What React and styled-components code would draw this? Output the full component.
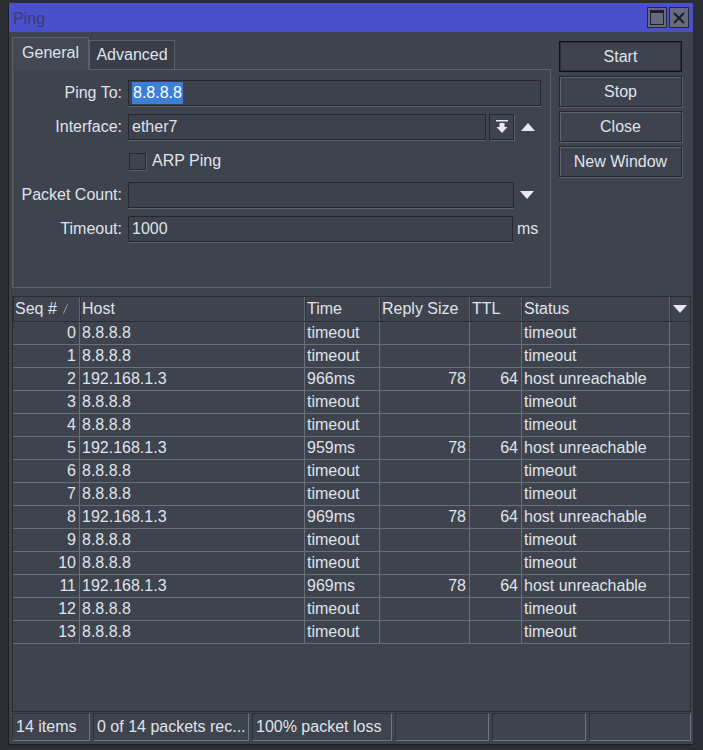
import React from "react";
import styled, { createGlobalStyle } from "styled-components";

const Global = createGlobalStyle`
  html, body { margin: 0; padding: 0; background: #2a2d33; }
  body { font-family: "Liberation Sans", Arial, sans-serif; font-size: 16px; color: #dfe3ea; }
  * { box-sizing: border-box; }
`;

const Screen = styled.div`
  width: 703px;
  height: 750px;
  padding: 3px 0 0 8px;
  background: #2a2d33;
`;

const Window = styled.div`
  width: 685px;
  height: 742px;
  background: #3f434e;
  border-left: 1px solid #1c1e23;
  border-bottom: 1px solid #1c1e23;
  display: flex;
  flex-direction: column;
`;

const TitleBar = styled.div`
  height: 29px;
  background: #4a4fcc;
  display: flex;
  align-items: center;
  padding: 0 4px 0 4px;
  color: #393e6e;
  flex-shrink: 0;
`;

const Title = styled.div`
  flex: 1;
  padding-top: 2px;
`;

const TitleBtn = styled.div`
  width: 20px;
  height: 21px;
  margin-left: 2px;
  background: #676b80;
  border: 1px solid #262834;
  display: flex;
  align-items: center;
  justify-content: center;
`;

const Body = styled.div`
  flex: 1;
  display: flex;
  flex-direction: column;
  padding: 5px 2px 3px 3px;
`;

const Top = styled.div`
  display: flex;
  height: 255px;
`;

const Left = styled.div`
  width: 539px;
  display: flex;
  flex-direction: column;
`;

const Tabs = styled.div`
  display: flex;
  align-items: flex-end;
  height: 33px;
`;

const Tab = styled.div`
  height: ${(p) => (p.$active ? "33px" : "30px")};
  width: ${(p) => p.$w}px;
  border: 1px solid #5a5f6a;
  border-bottom: ${(p) => (p.$active ? "none" : "1px solid #5a5f6a")};
  background: ${(p) => (p.$active ? "#434853" : "#393d47")};
  display: flex;
  align-items: center;
  justify-content: center;
  padding-bottom: ${(p) => (p.$active ? "3px" : "0")};
`;

const Panel = styled.div`
  height: 218px;
  border: 1px solid #5a5f6a;
  border-top: none;
  box-shadow: inset 1px 0 0 #4b505b;
  padding: 10px 0 0 0;
  display: flex;
  flex-direction: column;
  gap: 8px;
  position: relative;
`;

const PanelTopLine = styled.div`
  position: absolute;
  top: -1px;
  left: 76px;
  right: -1px;
  height: 1px;
  background: #5a5f6a;
`;

const Row = styled.div`
  display: flex;
  align-items: center;
  height: 26px;
`;

const Label = styled.div`
  width: 115px;
  text-align: right;
  padding-right: 6px;
  flex-shrink: 0;
`;

const Input = styled.div`
  width: ${(p) => p.$w}px;
  height: 26px;
  background: #3d414b;
  border: 1px solid #25282e;
  box-shadow: 0 1px 0 #5a5f6a;
  display: flex;
  align-items: center;
  padding-left: 3px;
`;

const Selected = styled.span`
  background: #3c7fd8;
  color: #ffffff;
  padding: 2px 1px;
`;

const DropBtn = styled.div`
  width: 25px;
  height: 26px;
  margin-left: 3px;
  border: 1px solid #25282e;
  box-shadow: 1px 1px 0 #5a5f6a;
  display: flex;
  align-items: center;
  justify-content: center;
`;

const Arrow = styled.div`
  width: 26px;
  display: flex;
  justify-content: center;
  margin-left: ${(p) => p.$ml || 0}px;
`;

const CheckRow = styled.div`
  display: flex;
  align-items: center;
  height: 18px;
  margin: 4px 0 4px 116px;
`;

const Check = styled.div`
  width: 17px;
  height: 17px;
  border: 1px solid #25282e;
  box-shadow: 1px 1px 0 #5a5f6a;
  margin-right: 6px;
`;

const Unit = styled.div`
  margin-left: 4px;
`;

const Buttons = styled.div`
  margin-left: 8px;
  padding-top: 4px;
  display: flex;
  flex-direction: column;
  gap: 4px;
  width: 123px;
`;

const Button = styled.div`
  height: 31px;
  border: 1px solid ${(p) => (p.$focus ? "#111317" : "#25282e")};
  box-shadow: ${(p) =>
    p.$focus ? "inset 0 0 0 1px #2d3037" : "inset 1px 1px 0 #5d626d, 1px 1px 0 #5a5f6a"};
  display: flex;
  align-items: center;
  justify-content: center;
  background: #3f434e;
`;

const TableBox = styled.div`
  margin-top: 4px;
  width: 679px;
  flex: 1;
  border-top: 1px solid #2a2d33;
  border-left: 1px solid #2a2d33;
  border-right: 1px solid #2a2d33;
  display: flex;
  flex-direction: column;
`;

const cols = "67px 225px 75px 90px 52px 148px 1fr";

const HeadRow = styled.div`
  display: grid;
  grid-template-columns: ${cols};
  height: 25px;
  border-bottom: 1px solid #2a2d33;
`;

const HeadCell = styled.div`
  border-right: 1px solid #5f6471;
  box-shadow: inset 1px 0 0 #2f323a;
  display: flex;
  align-items: center;
  padding-left: 2px;
  gap: 6px;
  &:last-child { border-right: none; justify-content: center; padding-left: 0; }
`;

const DataRow = styled.div`
  display: grid;
  grid-template-columns: ${cols};
  height: 23px;
  border-bottom: 1px solid #6a6f7c;
`;

const Cell = styled.div`
  border-right: 1px solid #6a6f7c;
  display: flex;
  align-items: center;
  justify-content: ${(p) => (p.$right ? "flex-end" : "flex-start")};
  padding: 0 ${(p) => (p.$right ? "3px" : "2px")} 0 2px;
  white-space: nowrap;
  overflow: hidden;
  &:last-child { border-right: none; }
`;

const Empty = styled.div`
  flex: 1;
`;

const StatusBar = styled.div`
  height: 30px;
  display: flex;
  gap: 3px;
  border-top: 1px solid #2a2d33;
  padding-top: 1px;
`;

const StatusCell = styled.div`
  width: ${(p) => p.$w}px;
  height: 28px;
  border: 1px solid #2f323a;
  border-right-color: #70757f;
  border-bottom-color: #70757f;
  display: flex;
  align-items: center;
  padding-left: 3px;
  white-space: nowrap;
  overflow: hidden;
`;

const TriUp = () => (
  <svg width="14" height="8" viewBox="0 0 14 8"><path d="M7 0 L14 8 L0 8 Z" fill="#e6e9ee" /></svg>
);
const TriDown = () => (
  <svg width="14" height="8" viewBox="0 0 14 8"><path d="M0 0 L14 0 L7 8 Z" fill="#e6e9ee" /></svg>
);

const rows = [
  ["0", "8.8.8.8", "timeout", "", "", "timeout"],
  ["1", "8.8.8.8", "timeout", "", "", "timeout"],
  ["2", "192.168.1.3", "966ms", "78", "64", "host unreachable"],
  ["3", "8.8.8.8", "timeout", "", "", "timeout"],
  ["4", "8.8.8.8", "timeout", "", "", "timeout"],
  ["5", "192.168.1.3", "959ms", "78", "64", "host unreachable"],
  ["6", "8.8.8.8", "timeout", "", "", "timeout"],
  ["7", "8.8.8.8", "timeout", "", "", "timeout"],
  ["8", "192.168.1.3", "969ms", "78", "64", "host unreachable"],
  ["9", "8.8.8.8", "timeout", "", "", "timeout"],
  ["10", "8.8.8.8", "timeout", "", "", "timeout"],
  ["11", "192.168.1.3", "969ms", "78", "64", "host unreachable"],
  ["12", "8.8.8.8", "timeout", "", "", "timeout"],
  ["13", "8.8.8.8", "timeout", "", "", "timeout"],
];

export default function App() {
  return (
    <Screen>
      <Global />
      <Window>
        <TitleBar>
          <Title>Ping</Title>
          <TitleBtn>
            <svg width="14" height="15" viewBox="0 0 14 15">
              <rect x="0.5" y="0.5" width="13" height="14" fill="none" stroke="#1e2030" />
              <rect x="0" y="0" width="14" height="3" fill="#1e2030" />
            </svg>
          </TitleBtn>
          <TitleBtn>
            <svg width="12" height="12" viewBox="0 0 12 12">
              <path d="M1 1 L11 11 M11 1 L1 11" stroke="#1e2030" strokeWidth="2.2" />
            </svg>
          </TitleBtn>
        </TitleBar>
        <Body>
          <Top>
            <Left>
              <Tabs>
                <Tab $active $w={77}>General</Tab>
                <Tab $w={86}>Advanced</Tab>
              </Tabs>
              <Panel>
                <PanelTopLine />
                <Row>
                  <Label>Ping To:</Label>
                  <Input $w={413}><Selected>8.8.8.8</Selected></Input>
                </Row>
                <Row>
                  <Label>Interface:</Label>
                  <Input $w={358}>ether7</Input>
                  <DropBtn>
                    <svg width="14" height="14" viewBox="0 0 14 14">
                      <rect x="1" y="0" width="12" height="1.5" fill="#e6e9ee" />
                      <path d="M4.5 3 H9.5 V7 H12.5 L7 13 L1.5 7 H4.5 Z" fill="#e6e9ee" />
                    </svg>
                  </DropBtn>
                  <Arrow $ml={1}><TriUp /></Arrow>
                </Row>
                <CheckRow>
                  <Check />
                  ARP Ping
                </CheckRow>
                <Row>
                  <Label>Packet Count:</Label>
                  <Input $w={386} />
                  <Arrow><TriDown /></Arrow>
                </Row>
                <Row>
                  <Label>Timeout:</Label>
                  <Input $w={385}>1000</Input>
                  <Unit>ms</Unit>
                </Row>
              </Panel>
            </Left>
            <Buttons>
              <Button $focus>Start</Button>
              <Button>Stop</Button>
              <Button>Close</Button>
              <Button>New Window</Button>
            </Buttons>
          </Top>
          <TableBox>
            <HeadRow>
              <HeadCell>
                Seq #
                <svg width="5" height="10" viewBox="0 0 5 10"><path d="M0.5 9.5 L4.5 0.5" stroke="#9aa0ab" strokeWidth="1" /></svg>
              </HeadCell>
              <HeadCell>Host</HeadCell>
              <HeadCell>Time</HeadCell>
              <HeadCell>Reply Size</HeadCell>
              <HeadCell>TTL</HeadCell>
              <HeadCell>Status</HeadCell>
              <HeadCell><TriDown /></HeadCell>
            </HeadRow>
            {rows.map((r) => (
              <DataRow key={r[0]}>
                <Cell $right>{r[0]}</Cell>
                <Cell>{r[1]}</Cell>
                <Cell>{r[2]}</Cell>
                <Cell $right>{r[3]}</Cell>
                <Cell $right>{r[4]}</Cell>
                <Cell>{r[5]}</Cell>
                <Cell />
              </DataRow>
            ))}
            <Empty />
          </TableBox>
          <StatusBar>
            <StatusCell $w={78}>14 items</StatusCell>
            <StatusCell $w={156}>0 of 14 packets rec...</StatusCell>
            <StatusCell $w={140}>100% packet loss</StatusCell>
            <StatusCell $w={94} />
            <StatusCell $w={94} />
            <StatusCell $w={102} />
          </StatusBar>
        </Body>
      </Window>
    </Screen>
  );
}
